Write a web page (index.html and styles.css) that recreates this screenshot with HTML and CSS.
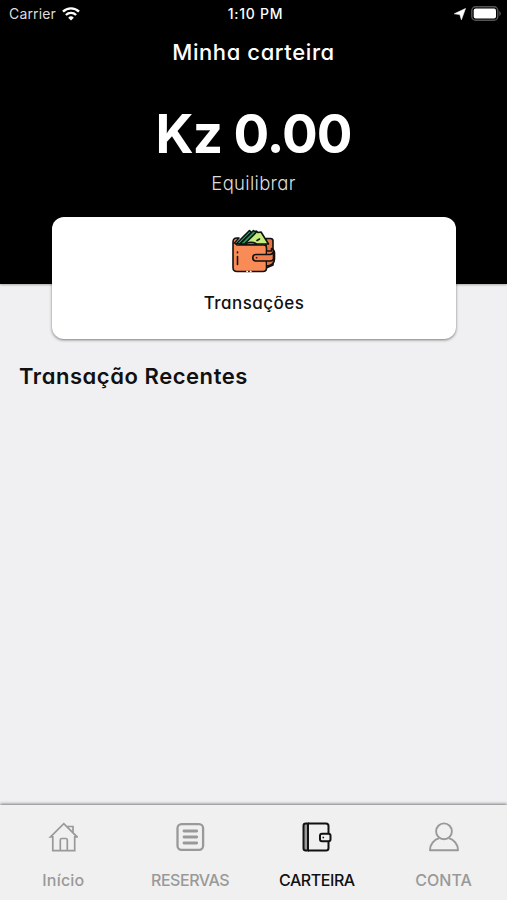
FILE: index.html
```html
<!DOCTYPE html>
<html lang="pt">

<head>
  <meta charset="UTF-8" />
  <meta name="viewport" content="width=device-width, initial-scale=1.0">
  <title>Minha carteira</title>
  <link rel="stylesheet" href="styles.css">
</head>

<body>
  <header class="header">
    <div class="status-bar">
      <div class="status-left">
        <span class="carrier">Carrier</span>
        <svg class="wifi" width="18" height="14" viewBox="0 0 18 14">
          <path d="M1 4.700a11.300 11.300 0 0 1 16 0M3.900 8a7.200 7.200 0 0 1 10.200 0" fill="none" stroke="#fff" stroke-width="2.400" />
          <path d="M9 13.600 6.200 10.700a4 4 0 0 1 5.600 0z" fill="#fff" />
        </svg>
      </div>
      <span class="time">1:10 PM</span>
      <div class="status-right">
        <svg width="12" height="12" viewBox="0 0 12 12">
          <path d="M11.500.500 7.400 11.800 5.800 6.600.300 5.800z" fill="#fff" stroke="#fff" stroke-width=".6" />
        </svg>
        <svg width="31" height="15" viewBox="0 0 31 15">
          <rect x=".8" y=".8" width="26" height="13.400" rx="3.800" fill="none" stroke="#555" stroke-width="1.400" />
          <rect x="2.700" y="2.600" width="22.300" height="9.800" rx="2" fill="#fff" />
          <path d="M28.300 5v5c2-.8 2-4.200 0-5z" fill="#555" />
        </svg>
      </div>
    </div>
    <h1>Minha carteira</h1>
    <p class="balance">Kz 0.00</p>
    <p class="balance-label">Equilibrar</p>
  </header>

  <main>
    <a class="card" href="#">
      <svg class="card-icon" width="44" height="44" viewBox="0 0 44 44" stroke="#111" stroke-width="1.600" stroke-linejoin="round" stroke-linecap="round">
        <path d="M34 9.500h4.500q2.500 0 2.500 2.500V36l-7 3z" fill="#e87342" />
        <path d="M8 15 24 2l2 1.500L29 3l7.500 12H8z" fill="#c3ee7d" />
        <path d="M4.500 14.500 17.500 1.500l2 2L8 15z" fill="#21a05b" />
        <path d="M8 15 21.500 1.500l2.500 2L12.500 15z" fill="#21a05b" />
        <path d="M13 16a6.500 4.500 0 0 1 12 0z" fill="#35a95f" />
        <path d="m25 11.500 2.500-1.500" />
        <path d="M1 13q0-4 4-4h2l-4.500 5 2.500 2h27q2.500 0 2.500 3v20q0 3.500-3.500 3.500H5Q1 42.500 1 38.500z" fill="#f98b56" />
        <path d="M5.500 27.500v8M5.500 23v.7" />
        <path d="M35 22h4.500V19.500q3 1.500 3 4.500v6q0 6-7.500 7" fill="#e87342" />
        <path d="M24 25.500H38q2.500 0 3.500-3v7q0 2.500-3.500 2.500H24a3.250 3.250 0 0 1 0-6.500z" fill="#f47f4e" />
        <path d="M24.500 28.800h.2" />
        <path d="M15 42.500h.4M18.500 42.500h.4" stroke="#fff" stroke-width="1.600" />
      </svg>
      <span class="card-label">Transações</span>
    </a>
    <h2>Transação Recentes</h2>
  </main>

  <nav class="tab-bar">
    <a class="tab" href="#">
      <svg width="30" height="30" viewBox="0 0 30 30" fill="none" stroke="currentColor" stroke-width="1.700">
        <path d="M2.500 14.800 15.800 1.700 29 14.800h-2.300V28.600H4.800V14.800z" />
        <path d="M12.300 28V18q0-1.500 1.500-1.500h4q1.500 0 1.500 1.500v10M19.500 4.500h5.500V10.200" />
      </svg>
      <span class="tab-inicio">Início</span>
    </a>
    <a class="tab" href="#">
      <svg width="30" height="30" viewBox="0 0 30 30" fill="none" stroke="currentColor">
        <rect x="2.500" y="2.200" width="25.600" height="25.600" rx="4" stroke-width="2.300" />
        <path d="M9 9h12.700M9 15h12.700M9 21h12.700" stroke-width="2.800" stroke-linecap="round" />
      </svg>
      <span class="tab-reservas">RESERVAS</span>
    </a>
    <a class="tab active" href="#">
      <svg width="30" height="30" viewBox="0 0 30 30" fill="none" stroke="currentColor" stroke-width="2">
        <path d="M6 1.500v27H3.800a2.300 2.300 0 0 1-2.300-2.300V3.800a2.300 2.300 0 0 1 2.300-2.300z" fill="#999" />
        <path d="M6 1.500h18q2.500 0 2.500 2.500v7.500M6 28.500h18q2.500 0 2.500-2.500v-7" />
        <path d="M20 11.800h6.500q2 0 2 2v3.400q0 2-2 2H20a2 2 0 0 1-2-2v-3.400a2 2 0 0 1 2-2z" />
        <path d="M21.300 14.700v1.600" stroke-width="1.500" />
      </svg>
      <span class="tab-carteira">CARTEIRA</span>
    </a>
    <a class="tab" href="#">
      <svg width="30" height="30" viewBox="0 0 30 30" fill="none" stroke="currentColor" stroke-width="1.900">
        <circle cx="15" cy="9.300" r="7.900" />
        <path d="M10.300 16.200C4.800 17.800 1 22.500 1 28.200h28c0-5.700-3.800-10.400-9.300-12" stroke-linejoin="round" />
      </svg>
      <span class="tab-conta">CONTA</span>
    </a>
  </nav>
</body>

</html>
```
FILE: styles.css
```css
/* Basic Reset & Font */
* {
  box-sizing: border-box;
  margin: 0;
  padding: 0;
}

body {
  height: 100vh;
  display: flex;
  flex-direction: column;
  font-family: Inter, "Open Sans", sans-serif;
  font-feature-settings: "cv11";
  background-color: #f0f0f2;
  color: #111;
  overflow: hidden;
  white-space: nowrap;
}

a {
  color: inherit;
  text-decoration: none;
}

/* Header */
.header {
  height: 284px;
  flex-shrink: 0;
  background-color: #000;
  color: #fff;
  text-align: center;
  box-shadow: 0 1px 2px rgba(0, 0, 0, 0.3);
}

.status-bar {
  display: grid;
  grid-template-columns: 1fr auto 1fr;
  align-items: center;
  height: 27px;
  padding: 0 5px 0 9px;
  font-size: 14px;
  font-feature-settings: normal;
}

.status-left,
.status-right {
  display: flex;
  align-items: center;
  gap: 6px;
}

.status-right {
  justify-content: flex-end;
  gap: 5px;
}

.carrier {
  color: #ddd;
  letter-spacing: 0.15px;
}

.time {
  font-weight: 500;
  letter-spacing: 0.7px;
}

h1 {
  margin-top: 10px;
  font-size: 22px;
  font-weight: 500;
  line-height: 30px;
  letter-spacing: 0.6px;
}

.balance {
  margin-top: 32px;
  font-size: 53px;
  font-weight: 650;
  line-height: 70px;
  letter-spacing: -1px;
}

.balance-label {
  font-size: 18.5px;
  font-weight: 300;
  line-height: 28px;
  letter-spacing: 0.3px;
  color: #ddd;
}

/* Content */
main {
  flex: 1;
}

.card {
  display: flex;
  flex-direction: column;
  align-items: center;
  height: 122px;
  margin: -67px 51px 0 52px;
  padding-top: 12px;
  position: relative;
  background-color: #fff;
  border-radius: 12px;
  box-shadow: 0 1px 3px rgba(0, 0, 0, 0.5);
}

.card-label {
  margin-top: 17px;
  font-size: 17px;
  font-weight: 500;
  line-height: 26px;
  letter-spacing: 0.45px;
}

h2 {
  margin: 20px 0 0 19px;
  font-size: 22px;
  font-weight: 600;
  line-height: 34px;
  letter-spacing: 0.55px;
}

/* Bottom tabs */
.tab-bar {
  display: grid;
  grid-template-columns: repeat(4, 1fr);
  height: 95px;
  background-color: #f0f0f0;
  box-shadow: 0 -1px 3px rgba(0, 0, 0, 0.5);
}

.tab {
  display: flex;
  flex-direction: column;
  align-items: center;
  gap: 16px;
  padding-top: 17px;
  font-size: 16px;
  font-weight: 500;
  line-height: 24px;
  color: #999;
}

.tab.active {
  color: #111;
}

.tab-inicio {
  letter-spacing: 0.2px;
}

.tab-reservas,
.tab-carteira {
  letter-spacing: -0.45px;
}
```
